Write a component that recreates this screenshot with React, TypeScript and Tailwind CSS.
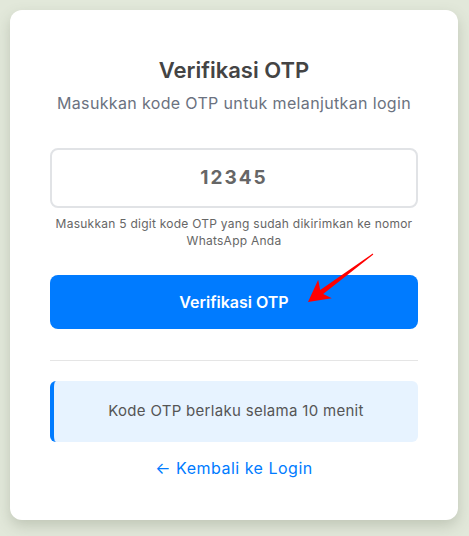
export default function App() {
  return (
    <div className="min-h-screen bg-[#e2e8da] p-[10px] font-['Inter','Noto_Sans',sans-serif]">
      <div className="relative h-[510px] w-[448px] rounded-xl bg-white px-10 pt-[45px] shadow-[0_6px_14px_rgba(90,100,80,0.25)]">
        {/* Header */}
        <h1 className="text-center text-[22px] font-semibold leading-[30px] text-[#444]">Verifikasi OTP</h1>
        <p className="mt-[6px] text-center text-[16px] leading-[24px] tracking-[0.35px] text-[#6b7280]">
          Masukkan kode OTP untuk melanjutkan login
        </p>

        {/* OTP input */}
        <div className="mt-[33px] flex h-[60px] items-center justify-center rounded-lg border-2 border-[#e1e3e6]">
          <span className="text-[19px] font-bold tracking-[2px] text-[#666]">12345</span>
        </div>
        <p className="mt-[7px] text-center text-[12px] leading-[17px] tracking-[0.25px] text-[#666]">
          Masukkan 5 digit kode OTP yang sudah dikirimkan ke nomor WhatsApp Anda
        </p>

        {/* Button */}
        <button className="mt-[26px] flex h-[54px] w-full items-center justify-center rounded-lg bg-[#007bff] text-[16px] font-semibold text-white">
          Verifikasi OTP
        </button>

        <div className="mt-[31px] h-px bg-[#e5e5e5]" />

        {/* Info box */}
        <div className="mt-[20px] flex h-[61px] items-center justify-center rounded-md border-l-4 border-[#007bff] bg-[#e7f3ff] text-[15px] tracking-[0.3px] text-[#555]">
          Kode OTP berlaku selama 10 menit
        </div>

        <div className="mt-[14px] text-center text-[16px] tracking-[0.5px] text-[#007bff]">← Kembali ke Login</div>

        {/* Annotation arrow */}
        <svg className="pointer-events-none absolute left-0 top-0" width="448" height="510" viewBox="0 0 448 510">
          <polygon
            points="362.7,243.6 310.2,279.9 308.2,269.8 298,292 321.8,288.2 313.2,283.9 363.3,244.4"
            fill="#ff0000"
          />
        </svg>
      </div>
    </div>
  );
}
